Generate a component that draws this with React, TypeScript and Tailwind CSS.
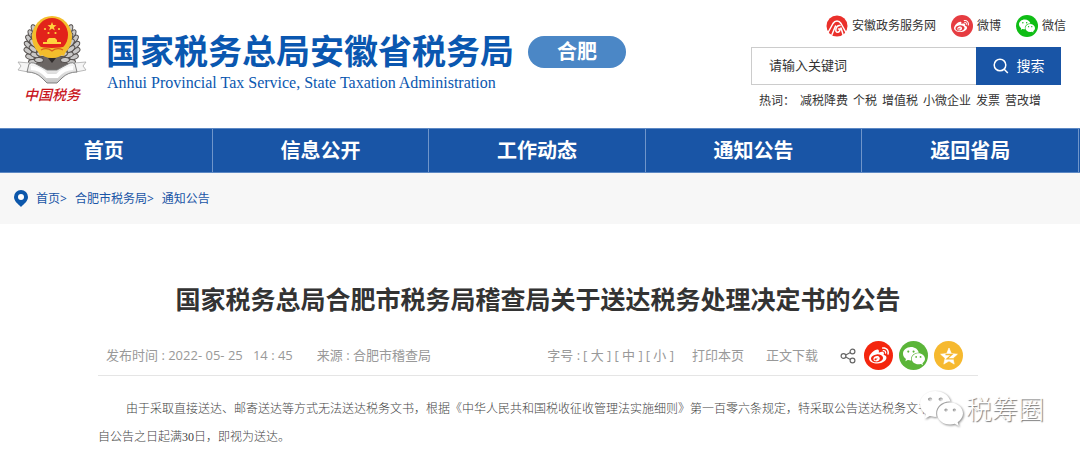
import type { ReactNode } from "react";
import { FaWeibo, FaWeixin } from "react-icons/fa";
import { IoLogoWechat } from "react-icons/io5";

const navItems = ["首页", "信息公开", "工作动态", "通知公告", "返回省局"];
const hotWords = ["减税降费", "个税", "增值税", "小微企业", "发票", "营改增"];
const fontSizes = ["大", "中", "小"];

// wheat grains on the right side of the emblem, mirrored for the left
const grains = [
  [54, 14, 60],
  [57, 19, 65],
  [59, 24, 75],
  [60, 30, 85],
  [60, 36, 95],
  [58, 42, 110],
  [55, 47, 125],
  [54, 22, 60],
  [55, 28, 75],
  [55, 34, 90],
  [53, 40, 110],
  [49, 45, 125],
  [47, 39, 120],
];

function Emblem() {
  return (
    <svg viewBox="0 0 72 70" className="h-[70px] w-[72px]" aria-hidden="true">
      <defs>
        <linearGradient id="silver" x1="0" y1="0" x2="0" y2="1">
          <stop offset="0" stopColor="#fafafa" />
          <stop offset="1" stopColor="#c4c4c4" />
        </linearGradient>
        <g id="ear">
          {grains.map(([x, y, turn]) => (
            <ellipse
              key={`${x}-${y}`}
              cx={x}
              cy={y}
              rx="4.500"
              ry="2.400"
              transform={`rotate(${turn - 130} ${x} ${y})`}
              fill="#c9c8c7"
              stroke="#55504e"
              strokeWidth="1"
            />
          ))}
        </g>
      </defs>
      <path d="M18 24h36l4 18-11 14H25L14 42z" fill="#6a6563" />
      <use href="#ear" />
      <use href="#ear" transform="matrix(-1 0 0 1 72 0)" />
      {/* national emblem */}
      <ellipse cx="36" cy="22" rx="20" ry="21" fill="#f3bd2c" />
      <ellipse cx="36" cy="20" rx="16" ry="17" fill="#e2231a" />
      <path d="m36 7 1.200 3.100 3.300.1-2.600 2 .9 3.200-2.800-1.800-2.800 1.800.9-3.200-2.600-2 3.300-.1z" fill="#ffd23e" />
      <g fill="#ffd23e">
        <circle cx="29" cy="14" r="1.100" />
        <circle cx="43" cy="14" r="1.100" />
        <circle cx="32.500" cy="18" r="1.100" />
        <circle cx="39.500" cy="18" r="1.100" />
        <path d="M31 25l2-2h6l2 2v2h4v2H27v-2h4z" />
      </g>
      <path d="M20 31q8 2 16 2t16-2l-4 10-6-2-6 3-6-3-6 2z" fill="#f3bd2c" />
      <path d="M25 35q6-3 11 1 5-4 11-1" fill="none" stroke="#d8621a" strokeWidth="1.200" />
      <path d="M32 43h8l-4 5z" fill="#2f2b2a" />
      {/* ribbon */}
      <path d="M14 48 2 47l3 4-3 4 10 2zM58 48l12-1-3 4 3 4-10 2z" fill="#f5f5f5" stroke="#aaa" strokeWidth=".8" />
      <path
        d="M13 49q2-2 5-1 8 4 13 7h10q5-3 13-7 3-1 5 1l2 8q-9 0-15 6l-5 5H31l-5-5q-6-6-15-6z"
        fill="url(#silver)"
        stroke="#777"
        strokeWidth=".9"
      />
      <path d="M15 53q9 0 16 8h10q7-8 16-8" fill="none" stroke="#fff" strokeWidth="4" />
    </svg>
  );
}

function GovIcon() {
  return (
    <svg viewBox="0 0 22 22" className="size-[22px]" aria-hidden="true">
      <circle cx="11" cy="11" r="10.500" fill="#ea302b" />
      <g fill="none" stroke="#fff" strokeWidth="1.500" strokeLinecap="round" strokeLinejoin="round">
        <path d="M2 17.500 7 8.500Q8.500 6 11 6t4 2.500l5 9" />
        <path d="m6 19.500 3.500-8.500" />
        <path d="M14 10.500q-3-.500-4 3-.8 3.800 1.700 3.800 2.300-.3 2.300-3.300h-1.500M15 13l2 6.500" />
      </g>
    </svg>
  );
}

function SearchIcon() {
  return (
    <svg viewBox="0 0 16 16" className="size-4" fill="none" stroke="currentColor" strokeWidth="1.500" aria-hidden="true">
      <circle cx="7" cy="7" r="5.800" />
      <path d="m11.200 11.200 3.600 3.800" />
    </svg>
  );
}

function PinIcon() {
  return (
    <svg viewBox="0 0 14 17" className="h-[17px] w-3.5" aria-hidden="true">
      <path d="M7 0a7 7 0 0 1 7 7c0 4-4 7-7 10C4 14 0 11 0 7a7 7 0 0 1 7-7z" fill="#0c57ab" />
      <circle cx="7" cy="7" r="3" fill="#fff" />
    </svg>
  );
}

function ShareIcon() {
  return (
    <svg viewBox="0 0 16 16" className="size-4" fill="none" stroke="#666" strokeWidth="1.200" aria-hidden="true">
      <circle cx="3.500" cy="8" r="2.400" />
      <circle cx="12.500" cy="3.500" r="2.400" />
      <circle cx="12.500" cy="12.500" r="2.400" />
      <path d="m5.700 7 4.700-2.500M5.700 9l4.700 2.500" />
    </svg>
  );
}

function QzoneIcon() {
  return (
    <svg viewBox="0 0 20 20" className="size-5" aria-hidden="true">
      <path
        d="m10 2 2.400 5.600 6 .6-4.500 4 1.300 5.900L10 15l-5.200 3.100 1.300-5.900-4.500-4 6-.6z"
        fill="#fff"
        stroke="#fff"
        strokeWidth=".6"
        strokeLinejoin="round"
      />
      <path d="M6.500 8.500h6.500l-5 4.300h6.500" fill="none" stroke="#f6b92f" strokeWidth="1.300" />
    </svg>
  );
}

function TopLink({ icon, children }: { icon: ReactNode; children: ReactNode }) {
  return (
    <a href="#" className="flex items-center gap-1">
      {icon}
      {children}
    </a>
  );
}

function Header() {
  return (
    <header className="flex items-start justify-between pr-3.5">
      <div className="flex items-start pl-4">
        <a href="#" className="flex w-[72px] flex-col items-center pt-[15px]" aria-label="中国税务">
          <Emblem />
          <span className="font-['Liberation_Serif','Noto_Sans_CJK_SC',serif] text-sm leading-[22px] font-medium whitespace-nowrap text-[#c8161d] italic">
            中国税务
          </span>
        </a>
        <div className="pt-[31px] pl-[18px] text-[#0a57b0]">
          <p className="text-[34px] leading-10 font-bold whitespace-nowrap">国家税务总局安徽省税务局</p>
          <p className="pl-px font-['Liberation_Serif',serif] text-base leading-6 whitespace-nowrap">
            Anhui Provincial Tax Service, State Taxation Administration
          </p>
        </div>
        <a
          href="#"
          className="mt-9 ml-3.5 flex h-8 w-[98px] items-center justify-center rounded-full bg-[#4b87c6] text-xl font-bold text-white"
        >
          合肥
        </a>
      </div>

      <div className="w-[315px] pt-[15px] text-xs text-[#333]">
        <div className="flex h-[22px] items-center justify-end gap-[15px] whitespace-nowrap">
          <TopLink icon={<GovIcon />}>安徽政务服务网</TopLink>
          <TopLink
            icon={
              <span className="flex size-[22px] items-center justify-center rounded-full bg-[#e63c41] text-white">
                <FaWeibo size={15} />
              </span>
            }
          >
            微博
          </TopLink>
          <TopLink
            icon={
              <span className="flex size-[22px] items-center justify-center rounded-full bg-[#0fbd15] text-white">
                <IoLogoWechat size={16} />
              </span>
            }
          >
            微信
          </TopLink>
        </div>
        <form className="mt-2.5 mr-[5px] flex h-[38px]" onSubmit={(e) => e.preventDefault()}>
          <input
            type="text"
            aria-label="请输入关键词"
            placeholder="请输入关键词"
            className="min-w-0 flex-1 border border-r-0 border-[#ccc] pl-[17px] text-[13px] placeholder:text-[#333] placeholder:opacity-100"
          />
          <button type="submit" className="flex w-[85px] items-center justify-center gap-2 bg-[#1955a6] text-sm text-white">
            <SearchIcon />
            搜索
          </button>
        </form>
        <div className="flex pt-1.5 pl-2 leading-5 whitespace-nowrap">
          <span className="w-[41px]">热词：</span>
          <div className="flex gap-[5px]">
            {hotWords.map((word) => (
              <a key={word} href="#">
                {word}
              </a>
            ))}
          </div>
        </div>
      </div>
    </header>
  );
}

function Nav() {
  return (
    <nav className="mt-[17px] overflow-hidden border-y border-[#5c88c4] bg-[#1955a6]">
      <ul className="mr-px -ml-1 flex">
        {navItems.map((item) => (
          <li key={item} className="flex-1 border-r border-[#6f95ca]">
            <a href="#" className="block pt-px text-center text-xl leading-[42px] font-bold text-white">
              {item}
            </a>
          </li>
        ))}
      </ul>
    </nav>
  );
}

function Breadcrumb() {
  return (
    <nav aria-label="当前位置" className="flex h-[51px] items-center bg-[#f7f7f7] pl-3.5 text-xs text-[#1955a6]">
      <PinIcon />
      <div className="flex gap-2 pl-2">
        <span>
          <a href="#">首页</a>&gt;
        </span>
        <span>
          <a href="#">合肥市税务局</a>&gt;
        </span>
        <a href="#">通知公告</a>
      </div>
    </nav>
  );
}

function Article() {
  return (
    <article className="relative mr-[102px] ml-[98px]">
      <h1 className="pt-[55px] text-center text-[25px] leading-10 font-bold text-[#333]">
        国家税务总局合肥市税务局稽查局关于送达税务处理决定书的公告
      </h1>
      <div className="mt-[17px] flex h-10 items-center justify-between border-b border-[#e5e5e5] pr-[15px] pl-2 text-[13px] whitespace-nowrap text-[#999]">
        <div className="flex gap-6">
          <span>
            发布时间 : <time className="whitespace-pre">2022- 05- 25   14 : 45</time>
          </span>
          <span>来源 : 合肥市稽查局</span>
        </div>
        <div className="flex items-center">
          <span>字号 :</span>
          <div className="flex gap-[3px] pl-[3px]">
            {fontSizes.map((size) => (
              <button key={size} type="button">
                [ {size} ]
              </button>
            ))}
          </div>
          <button type="button" className="ml-[18px]">打印本页</button>
          <button type="button" className="ml-[22px]">正文下载</button>
          <button type="button" aria-label="分享" className="ml-[22px]">
            <ShareIcon />
          </button>
          <div className="flex gap-1.5 pl-2 text-white">
            <a href="#" aria-label="微博" className="flex size-[29px] items-center justify-center rounded-full bg-[#f4260e]">
              <FaWeibo size={20} />
            </a>
            <a href="#" aria-label="微信" className="flex size-[29px] items-center justify-center rounded-full bg-[#5bb539]">
              <IoLogoWechat size={22} />
            </a>
            <a href="#" aria-label="QQ空间" className="flex size-[29px] items-center justify-center rounded-full bg-[#f6b92f]">
              <QzoneIcon />
            </a>
          </div>
        </div>
      </div>
      <p className="pt-[19px] pb-2 indent-7 font-['Liberation_Serif','Noto_Sans_CJK_SC',serif] text-xs leading-7 font-light text-[#444]">
        由于采取直接送达、邮寄送达等方式无法送达税务文书，根据《中华人民共和国税收征收管理法实施细则》第一百零六条规定，特采取公告送达税务文书，
        <br />
        自公告之日起满30日，即视为送达。
      </p>
      <div className="absolute -right-[66px] bottom-7 flex items-center gap-0.5 text-[26px] leading-10 font-light text-white [text-shadow:1px_1px_1px_#777]">
        <FaWeixin size={45} className="drop-shadow-[1px_1px_1px_#888]" />
        税筹圈
      </div>
    </article>
  );
}

export default function App() {
  return (
    <div className="overflow-x-hidden bg-white font-['Open_Sans','Noto_Sans_CJK_SC',sans-serif]">
      <Header />
      <Nav />
      <Breadcrumb />
      <Article />
    </div>
  );
}
